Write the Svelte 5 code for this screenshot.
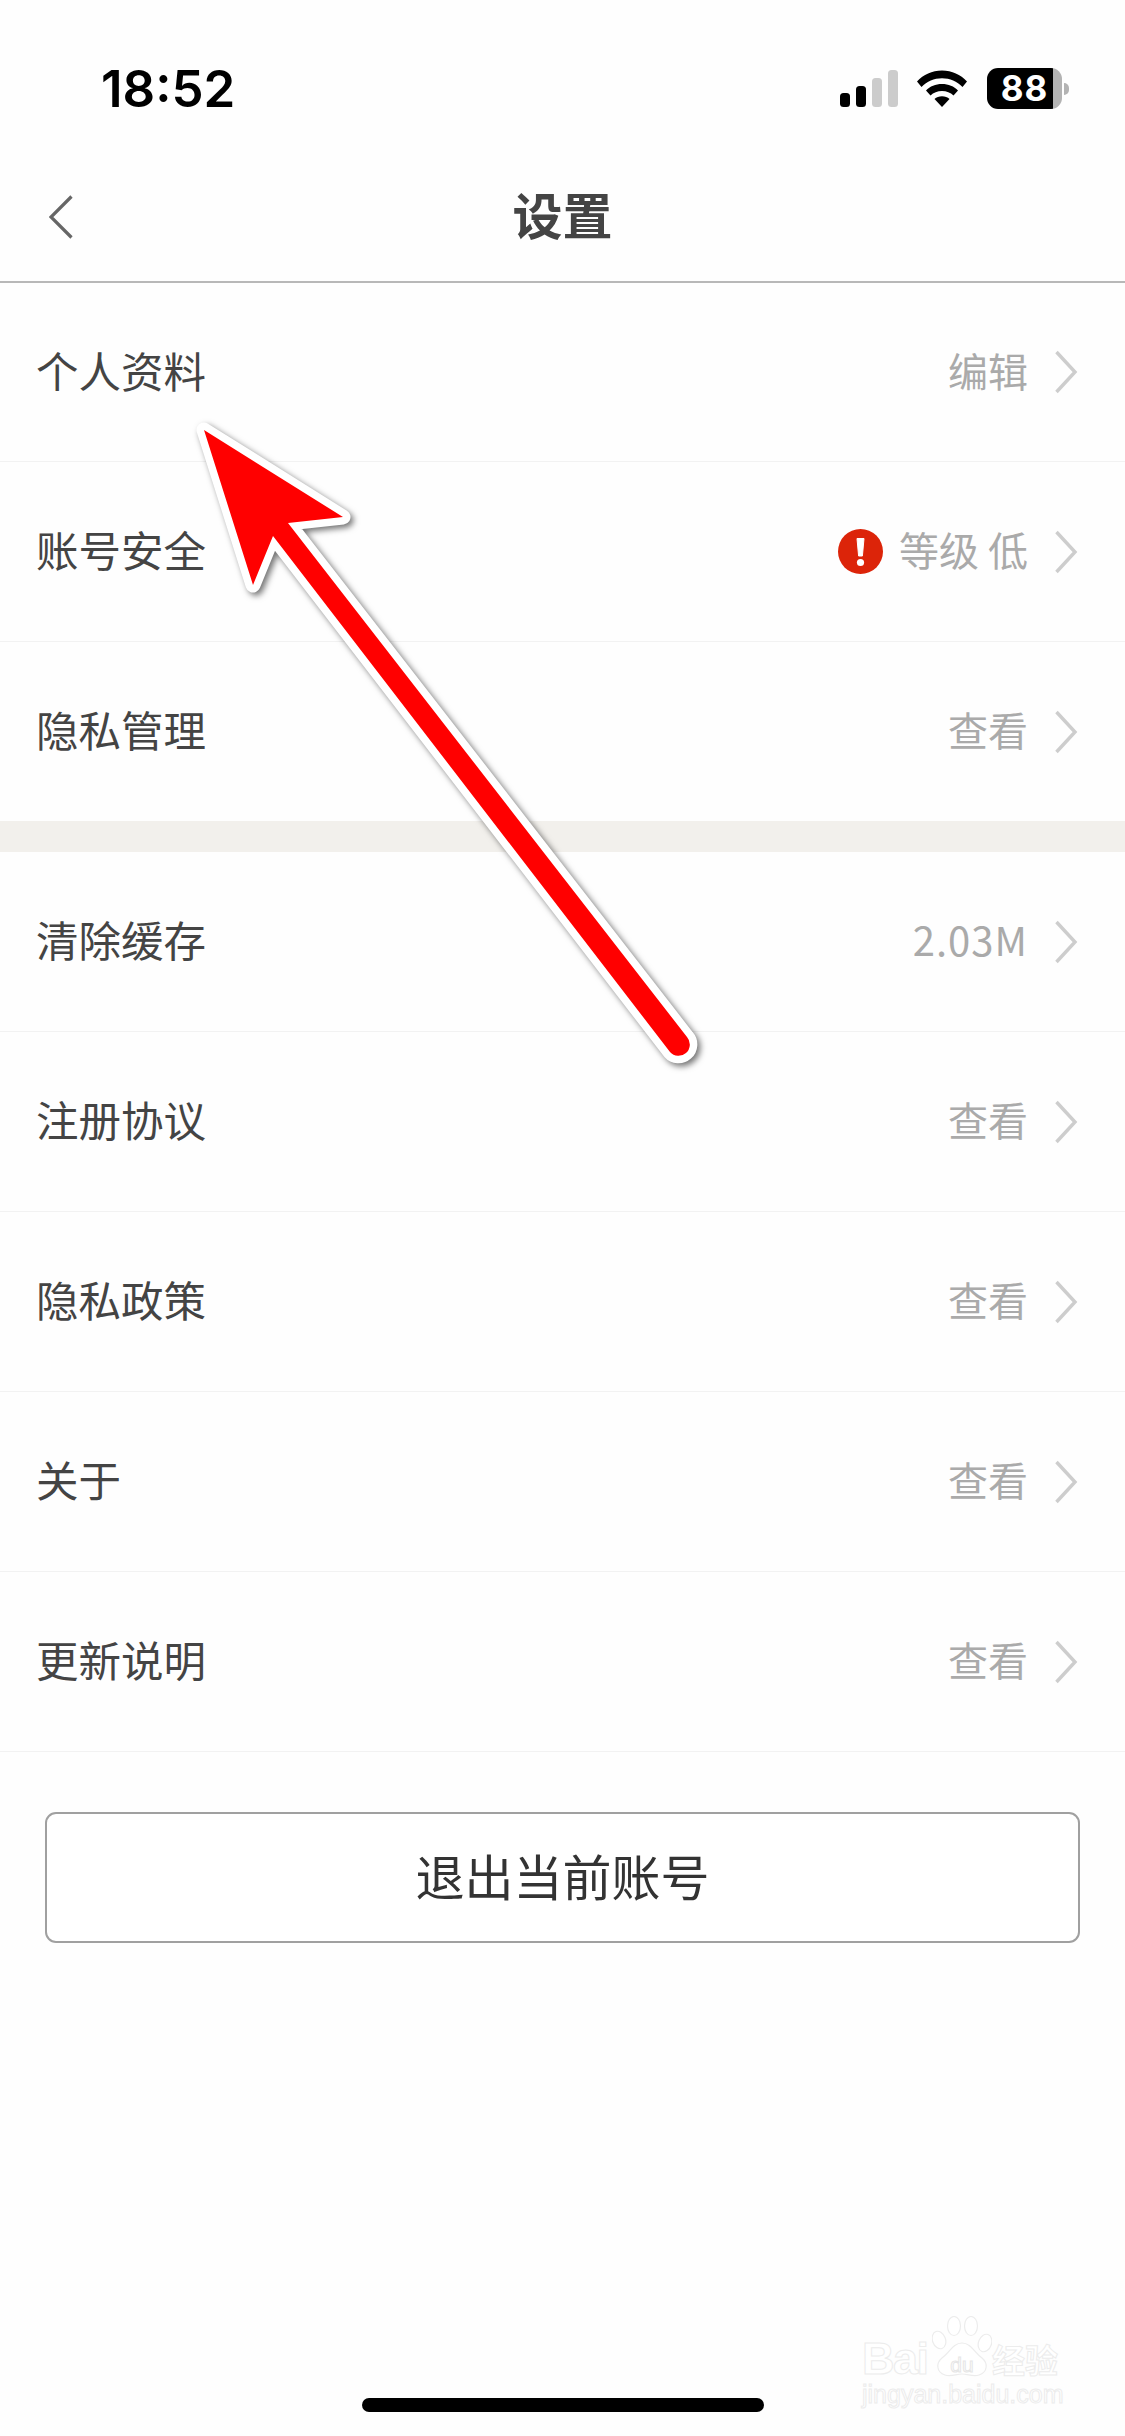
<script>
  const groupA = [
    { label: '个人资料', value: '编辑' },
    { label: '账号安全', value: '等级 低', alert: true },
    { label: '隐私管理', value: '查看' }
  ];
  const groupB = [
    { label: '清除缓存', value: '2.03M', numeric: true },
    { label: '注册协议', value: '查看' },
    { label: '隐私政策', value: '查看' },
    { label: '关于', value: '查看' },
    { label: '更新说明', value: '查看' }
  ];
</script>

{#snippet row(item)}
  <div class="row">
    <span class="label">{item.label}</span>
    <span class="right">
      {#if item.alert}
        <svg class="alert" viewBox="0 0 45 45" width="45" height="45">
          <circle cx="22.5" cy="22.5" r="22.5" fill="#dc2409" />
          <path d="M19 9.5h7l-1.6 17.5h-3.8z" fill="#fff" stroke="#fff" stroke-width="1" stroke-linejoin="round" />
          <circle cx="22.5" cy="33.5" r="3.6" fill="#fff" />
        </svg>
      {/if}
      <span class="value" class:numeric={item.numeric}>{item.value}</span>
      <svg class="chev" viewBox="0 0 24 44" width="24" height="44">
        <path d="M2.5 2l18.5 20-18.5 20" fill="none" stroke="#cdcdcd" stroke-width="3.4" />
      </svg>
    </span>
  </div>
{/snippet}

<div class="page">
  <header class="status">
    <span class="time">18:52</span>
    <div class="indicators">
      <svg class="signal" viewBox="0 0 58 38" width="58" height="38">
        <rect x="0" y="23" width="10" height="14" rx="3.5" fill="#000" />
        <rect x="16" y="16" width="10" height="21" rx="3.5" fill="#000" />
        <rect x="32" y="8" width="10" height="29" rx="3.5" fill="#ccc" />
        <rect x="48" y="0" width="10" height="37" rx="3.5" fill="#ccc" />
      </svg>
      <svg class="wifi" viewBox="0 0 50 37" width="50" height="37">
        <path d="M0 11.5C6.5 4.5 15 .5 25 .5s18.500 4 25 11l-4.500 5.500C40 11.500 33 8.200 25 8.200S10 11.500 4.500 17z" fill="#000" />
        <path d="M9 20.500C13 16.300 18.500 14 25 14s12 2.300 16 6.500l-4.500 5C33.500 22.500 29.500 21 25 21s-8.500 1.500-11.500 4.500z" fill="#000" />
        <path d="M17.500 29c2-1.800 4.500-2.800 7.500-2.800s5.500 1 7.500 2.800L25 37z" fill="#000" />
      </svg>
      <div class="battery">
        <div class="cell"><span class="level">88</span></div>
        <div class="nub"></div>
      </div>
    </div>
  </header>

  <nav class="nav">
    <svg class="back" viewBox="0 0 24 44" width="24" height="44">
      <path d="M22.500 1.500L2 22l20.500 20.500" fill="none" stroke="#666" stroke-width="3.200" />
    </svg>
    <h1>设置</h1>
  </nav>

  <section class="first">
    {#each groupA as item}{@render row(item)}{/each}
  </section>
  <div class="gap"></div>
  <section>
    {#each groupB as item}{@render row(item)}{/each}
  </section>

  <button class="logout">退出当前账号</button>

  <div class="home"></div>

  <div class="watermark">
    <div class="brand">
      <span class="bai">Bai</span>
      <span class="paw">
        <svg viewBox="0 0 60 66" width="60" height="66">
          <g fill="#fff" stroke="#ececec" stroke-width="1.200">
            <ellipse cx="7" cy="24" rx="6.500" ry="9" transform="rotate(-20 7 24)" />
            <ellipse cx="22" cy="10" rx="6.500" ry="9.500" />
            <ellipse cx="39" cy="10" rx="6.500" ry="9.500" />
            <ellipse cx="53" cy="27" rx="6.500" ry="9" transform="rotate(20 53 27)" />
            <path d="M30 27c9 0 12 9 20 15 6 5 6 14-3 17-6 2-11-1-17-1s-11 3-17 1c-9-3-9-12-3-17 8-6 11-15 20-15z" />
          </g>
          <text x="30" y="56" text-anchor="middle">du</text>
        </svg>
      </span>
      <span class="cn">经验</span>
    </div>
    <div class="url">jingyan.baidu.com</div>
  </div>

  <svg class="arrow" viewBox="0 0 1125 2436" width="1125" height="2436">
    <path
      d="M204 430L343 517L288 523L687 1037A11 11 0 0 1 670 1052L273 536L253 585Z"
      fill="#f00"
      stroke="#fff"
      stroke-width="15"
      stroke-linejoin="round"
      paint-order="stroke"
    />
  </svg>
</div>

<style>
  :global(body) {
    margin: 0;
    background: #fff;
  }
  .page {
    position: relative;
    width: 1125px;
    height: 2436px;
    overflow: hidden;
    background: #fefefe;
    font-family: "Noto Sans CJK SC", "Noto Sans", sans-serif;
    color: #444;
  }
  .status {
    height: 150px;
    box-sizing: border-box;
    padding: 68px 56px 0 101px;
    display: flex;
    justify-content: space-between;
    align-items: flex-start;
  }
  .time {
    font-family: "Inter", sans-serif;
    font-weight: 600;
    font-size: 51px;
    line-height: 42px;
    color: #000;
  }
  .indicators {
    display: flex;
    align-items: flex-start;
  }
  .signal {
    margin: 2px 19px 0 0;
  }
  .wifi {
    margin: 2px 20px 0 0;
  }
  .battery {
    display: flex;
    align-items: center;
    height: 41px;
  }
  .cell {
    width: 75px;
    height: 41px;
    border-radius: 11px;
    box-sizing: border-box;
    background: linear-gradient(90deg, #000 66px, #b3b3b3 66px);
    display: flex;
    align-items: center;
    justify-content: center;
  }
  .level {
    font-family: "Inter", sans-serif;
    font-weight: 700;
    font-size: 35px;
    letter-spacing: 1px;
    line-height: 41px;
    color: #fff;
  }
  .nub {
    width: 5px;
    height: 12px;
    margin-left: 2px;
    background: #b3b3b3;
    border-radius: 0 6px 6px 0;
  }
  .nav {
    height: 131px;
    position: relative;
    display: flex;
    align-items: center;
    justify-content: center;
    border-bottom: 2px solid #b8b8b8;
  }
  .back {
    position: absolute;
    left: 49px;
    top: 45px;
  }
  h1 {
    margin: 0 0 6px 0;
    font-size: 50px;
    line-height: 120px;
    font-weight: 700;
    color: #444;
  }
  .row {
    height: 180px;
    box-sizing: border-box;
    border-bottom: 1px solid #f2f2f2;
    padding: 0 47px 0 36px;
    display: flex;
    align-items: center;
    justify-content: space-between;
  }
  .first .row:first-child {
    height: 179px;
  }
  .label {
    font-size: 42.5px;
    color: #444;
    line-height: 60px;
    margin-bottom: 5px;
  }
  .right {
    display: flex;
    align-items: center;
  }
  .alert {
    margin-right: 16px;
  }
  .value {
    font-size: 40px;
    line-height: 60px;
    color: #aaa;
    margin: 0 26px 5px 0;
  }
  .numeric {
    letter-spacing: 1px;
  }
  .gap {
    height: 31px;
    background: #f2f0ec;
    margin-top: -1px;
    position: relative;
  }
  .logout {
    display: block;
    box-sizing: border-box;
    width: 1035px;
    height: 131px;
    margin: 60px 0 0 45px;
    padding: 0 0 6px;
    background: #fff;
    border: 2px solid #a0a0a0;
    border-radius: 11px;
    font-family: inherit;
    font-size: 49px;
    color: #333;
  }
  .home {
    position: absolute;
    left: 362px;
    top: 2398px;
    width: 402px;
    height: 14px;
    border-radius: 7px;
    background: #000;
  }
  .watermark {
    position: absolute;
    left: 862px;
    top: 2314px;
    width: 206px;
    color: #fff;
    -webkit-text-stroke: 1px #ececec;
    font-family: "Liberation Sans", sans-serif;
  }
  .brand {
    display: flex;
    align-items: flex-end;
    height: 68px;
  }
  .bai {
    font-size: 45px;
    line-height: 46px;
    font-weight: 700;
    letter-spacing: -1.500px;
    width: 70px;
  }
  .paw {
    display: block;
    width: 60px;
    height: 66px;
  }
  .paw svg {
    display: block;
  }
  .paw text {
    font-size: 21px;
    font-family: "Liberation Sans", sans-serif;
    fill: #fff;
    stroke: #e6e6e6;
    stroke-width: 1;
    -webkit-text-stroke: 0;
  }
  .cn {
    font-family: "Noto Sans CJK SC", sans-serif;
    font-size: 33px;
    line-height: 46px;
    font-weight: 700;
    white-space: nowrap;
  }
  .url {
    font-size: 25px;
    line-height: 30px;
    margin-top: -3px;
    white-space: nowrap;
  }
  .arrow {
    position: absolute;
    left: 0;
    top: 0;
    pointer-events: none;
    filter: drop-shadow(3px 3px 3px rgba(0, 0, 0, 0.55));
  }
</style>
